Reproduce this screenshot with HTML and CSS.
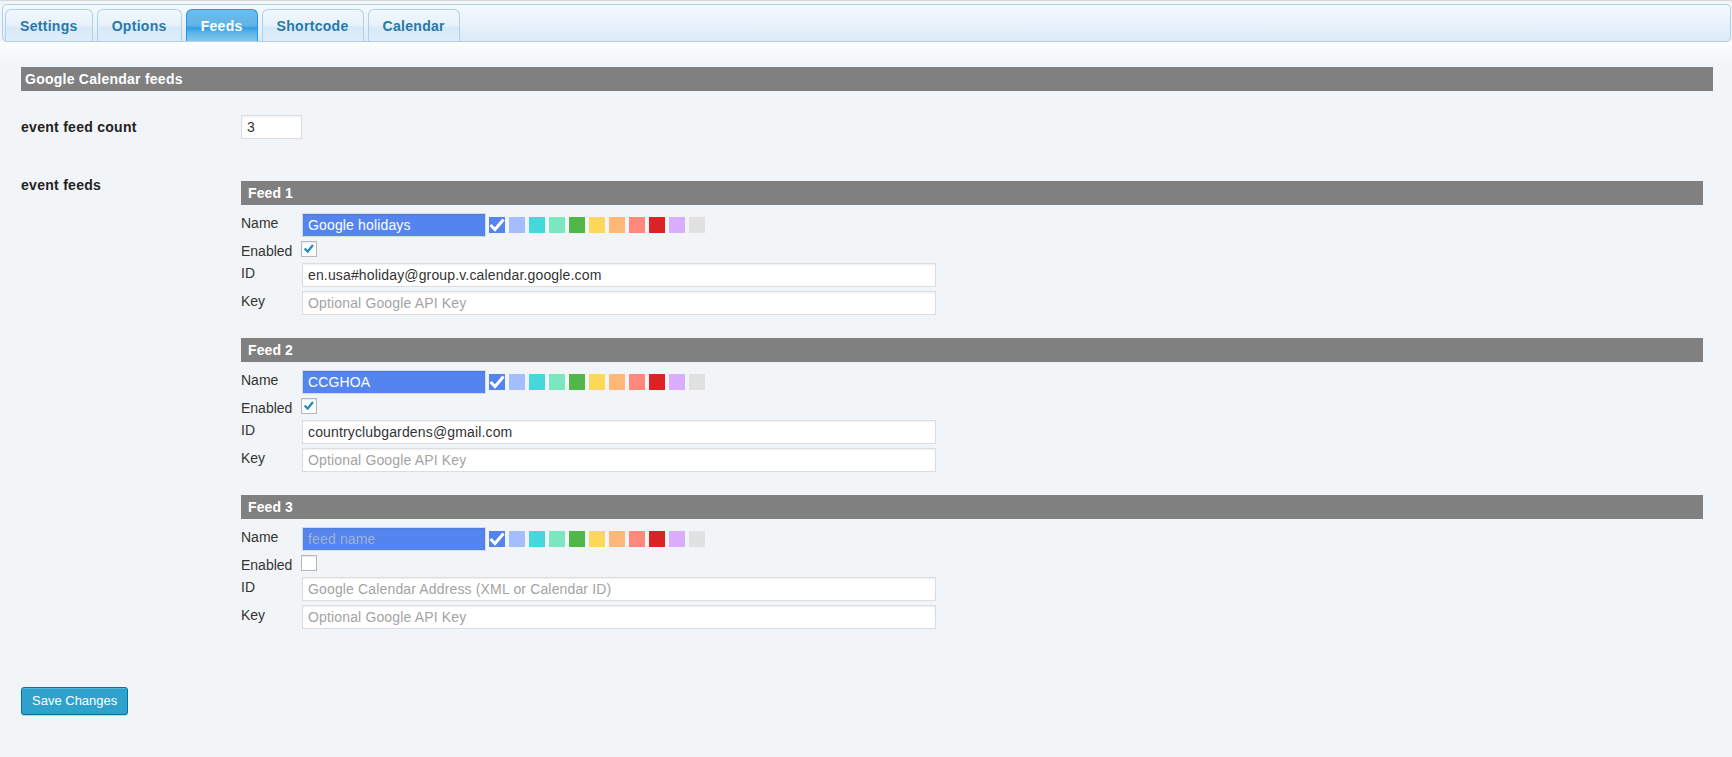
FILE: index.html
```html
<!DOCTYPE html>
<html>
<head>
<meta charset="utf-8">
<title>Google Calendar feeds</title>
<link rel="stylesheet" href="styles.css">
</head>
<body>
<div class="page">
  <div class="tabs">
    <a class="tab">Settings</a>
    <a class="tab">Options</a>
    <a class="tab tab-active">Feeds</a>
    <a class="tab">Shortcode</a>
    <a class="tab">Calendar</a>
  </div>
  <div class="panel">
    <div class="section-title">Google Calendar feeds</div>

    <div class="form-row count-row">
      <div class="form-label">event feed count</div>
      <input class="text-input count-input" type="text" value="3">
    </div>

    <div class="form-row feeds-row">
      <div class="form-label">event feeds</div>
      <div class="feeds">

        <div class="feed">
          <div class="feed-title">Feed 1</div>
          <div class="field">
            <span class="field-label">Name</span>
            <input class="text-input name-input" type="text" value="Google holidays" placeholder="feed name">
            <div class="swatches">
              <span class="swatch c1"><svg viewBox="0 0 16 16" width="16" height="16"><polyline points="1.5,8 6,12.5 14.5,2.5" fill="none" stroke="#fff" stroke-width="3"/></svg></span>
              <span class="swatch c2"></span><span class="swatch c3"></span><span class="swatch c4"></span><span class="swatch c5"></span><span class="swatch c6"></span><span class="swatch c7"></span><span class="swatch c8"></span><span class="swatch c9"></span><span class="swatch c10"></span><span class="swatch c11"></span>
            </div>
          </div>
          <div class="field field-enabled">
            <span class="field-label">Enabled</span>
            <span class="checkbox"><svg viewBox="0 0 16 16" width="14" height="14"><polyline points="3,7.5 6.5,11 12.5,3.5" fill="none" stroke="#1e8cbe" stroke-width="2.6"/></svg></span>
          </div>
          <div class="field field-id">
            <span class="field-label">ID</span>
            <input class="text-input wide-input" type="text" value="en.usa#holiday@group.v.calendar.google.com" placeholder="Google Calendar Address (XML or Calendar ID)">
          </div>
          <div class="field field-key">
            <span class="field-label">Key</span>
            <input class="text-input wide-input" type="text" value="" placeholder="Optional Google API Key">
          </div>
        </div>

        <div class="feed">
          <div class="feed-title">Feed 2</div>
          <div class="field">
            <span class="field-label">Name</span>
            <input class="text-input name-input" type="text" value="CCGHOA" placeholder="feed name">
            <div class="swatches">
              <span class="swatch c1"><svg viewBox="0 0 16 16" width="16" height="16"><polyline points="1.5,8 6,12.5 14.5,2.5" fill="none" stroke="#fff" stroke-width="3"/></svg></span>
              <span class="swatch c2"></span><span class="swatch c3"></span><span class="swatch c4"></span><span class="swatch c5"></span><span class="swatch c6"></span><span class="swatch c7"></span><span class="swatch c8"></span><span class="swatch c9"></span><span class="swatch c10"></span><span class="swatch c11"></span>
            </div>
          </div>
          <div class="field field-enabled">
            <span class="field-label">Enabled</span>
            <span class="checkbox"><svg viewBox="0 0 16 16" width="14" height="14"><polyline points="3,7.5 6.5,11 12.5,3.5" fill="none" stroke="#1e8cbe" stroke-width="2.6"/></svg></span>
          </div>
          <div class="field field-id">
            <span class="field-label">ID</span>
            <input class="text-input wide-input" type="text" value="countryclubgardens@gmail.com" placeholder="Google Calendar Address (XML or Calendar ID)">
          </div>
          <div class="field field-key">
            <span class="field-label">Key</span>
            <input class="text-input wide-input" type="text" value="" placeholder="Optional Google API Key">
          </div>
        </div>

        <div class="feed">
          <div class="feed-title">Feed 3</div>
          <div class="field">
            <span class="field-label">Name</span>
            <input class="text-input name-input" type="text" value="" placeholder="feed name">
            <div class="swatches">
              <span class="swatch c1"><svg viewBox="0 0 16 16" width="16" height="16"><polyline points="1.5,8 6,12.5 14.5,2.5" fill="none" stroke="#fff" stroke-width="3"/></svg></span>
              <span class="swatch c2"></span><span class="swatch c3"></span><span class="swatch c4"></span><span class="swatch c5"></span><span class="swatch c6"></span><span class="swatch c7"></span><span class="swatch c8"></span><span class="swatch c9"></span><span class="swatch c10"></span><span class="swatch c11"></span>
            </div>
          </div>
          <div class="field field-enabled">
            <span class="field-label">Enabled</span>
            <span class="checkbox"></span>
          </div>
          <div class="field field-id">
            <span class="field-label">ID</span>
            <input class="text-input wide-input" type="text" value="" placeholder="Google Calendar Address (XML or Calendar ID)">
          </div>
          <div class="field field-key">
            <span class="field-label">Key</span>
            <input class="text-input wide-input" type="text" value="" placeholder="Optional Google API Key">
          </div>
        </div>

      </div>
    </div>

    <button class="save-button" type="button">Save Changes</button>
  </div>
</div>
</body>
</html>
```

FILE: styles.css
```css
html, body {
  margin: 0;
  padding: 0;
  background: #f2f5f7;
  font-family: "Liberation Sans", Arial, sans-serif;
  font-size: 14px;
  color: #333;
}

.page {
  min-height: 756px;
  border-top: 1px solid #d6d6d6;
  background: #f2f5f7;
}

/* ---------- tabs ---------- */
.tabs {
  display: flex;
  align-items: flex-end;
  gap: 4px;
  height: 32px;
  margin: 3px 1px 0 2px;
  padding: 4px 2px 0 2px;
  border: 1px solid #aed0ea;
  border-radius: 5px;
  background: linear-gradient(to bottom, #f5f9fe 0%, #e9f2fb 50%, #dce9f6 100%);
}

.tab {
  display: block;
  box-sizing: border-box;
  height: 32px;
  padding: 8px 14px 0 14px;
  line-height: 17px;
  font-weight: bold;
  font-size: 14px;
  letter-spacing: 0.3px;
  color: #2779aa;
  border: 1px solid #aed0ea;
  border-bottom: none;
  border-radius: 6px 6px 0 0;
  background: linear-gradient(to bottom, #f2f8fe 0%, #e6f1fb 50%, #d8e9f8 56%, #deedf9 100%);
  cursor: pointer;
}

.tab-active {
  color: #fff;
  border-color: #2694e8;
  background: linear-gradient(to bottom, #6fbdea 0%, #5fb4e7 50%, #2f9fe0 58%, #5ab4e7 72%, #84c9ee 100%);
}

/* ---------- panel ---------- */
.panel {
  padding: 25px 19px 0 21px;
  background: linear-gradient(to bottom, #fcfdfe 0px, #f2f5f7 24px, #f2f5f7 100%);
}

.section-title {
  height: 24px;
  line-height: 24px;
  padding-left: 4px;
  background: #808080;
  color: #fff;
  font-weight: bold;
  font-size: 14px;
  letter-spacing: 0.25px;
}

.form-row {
  display: flex;
}

.form-label {
  width: 220px;
  flex: none;
  line-height: 20px;
  font-weight: bold;
  letter-spacing: 0.28px;
  color: #222;
}

.count-row {
  margin-top: 24px;
  align-items: center;
}

.count-input {
  width: 61px;
  margin-left: 1px;
}

.feeds-row {
  margin-top: 36px;
  align-items: flex-start;
}

.feeds {
  flex: 1;
  margin-right: 10px;
  padding-top: 6px;
  display: flex;
  flex-direction: column;
  gap: 23px;
}

.feed-title {
  height: 24px;
  line-height: 24px;
  padding-left: 7px;
  background: #808080;
  color: #fff;
  font-weight: bold;
  letter-spacing: 0.1px;
}

.field {
  display: flex;
  align-items: flex-start;
  margin-top: 4px;
}

.feed-title + .field {
  margin-top: 8px;
}

.field-id {
  margin-top: 2px;
}

.field-label {
  width: 61px;
  flex: none;
  line-height: 20px;
  color: #333;
}

/* ---------- inputs ---------- */
.text-input {
  box-sizing: border-box;
  height: 24px;
  margin: 0;
  padding: 0 5px;
  border: 1px solid #dddddd;
  background: #fff;
  box-shadow: inset 0 1px 2px rgba(0, 0, 0, 0.07);
  font-family: "Liberation Sans", Arial, sans-serif;
  font-size: 14px;
  letter-spacing: 0.15px;
  color: #333;
  outline: none;
}

.text-input::placeholder {
  color: #a3a3a3;
  opacity: 1;
}

.name-input {
  width: 184px;
  background: #5484ed;
  color: #fff;
  border-color: #d4dbe6;
}

.name-input::placeholder {
  color: #a0b2d8;
}

.wide-input {
  width: 634px;
}

.swatches {
  display: flex;
  gap: 4px;
  margin-left: 3px;
  margin-top: 4px;
}

.swatch {
  display: block;
  width: 16px;
  height: 16px;
}

.swatch svg {
  display: block;
}

.c1 { background: #5484ed; }
.c2 { background: #a4bdfc; }
.c3 { background: #46d6db; }
.c4 { background: #7ae7bf; }
.c5 { background: #51b749; }
.c6 { background: #fbd75b; }
.c7 { background: #ffb878; }
.c8 { background: #ff887c; }
.c9 { background: #dc2127; }
.c10 { background: #dbadff; }
.c11 { background: #e1e1e1; }

.checkbox {
  box-sizing: border-box;
  display: flex;
  align-items: center;
  justify-content: center;
  width: 16px;
  height: 16px;
  margin-left: -1px;
  border: 1px solid #b4b9be;
  background: #fff;
  box-shadow: inset 0 1px 2px rgba(0, 0, 0, 0.1);
}

.checkbox svg {
  display: block;
}

/* ---------- button ---------- */
.save-button {
  display: block;
  box-sizing: border-box;
  height: 28px;
  margin-top: 58px;
  padding: 0 10px 1px;
  border: 1px solid #0074a2;
  border-radius: 3px;
  background: #2ea2cc;
  box-shadow: inset 0 1px 0 rgba(120, 200, 230, 0.5), 0 1px 0 rgba(0, 0, 0, 0.15);
  color: #fff;
  font-family: "Liberation Sans", Arial, sans-serif;
  font-size: 13px;
  line-height: 26px;
  cursor: pointer;
}
```
